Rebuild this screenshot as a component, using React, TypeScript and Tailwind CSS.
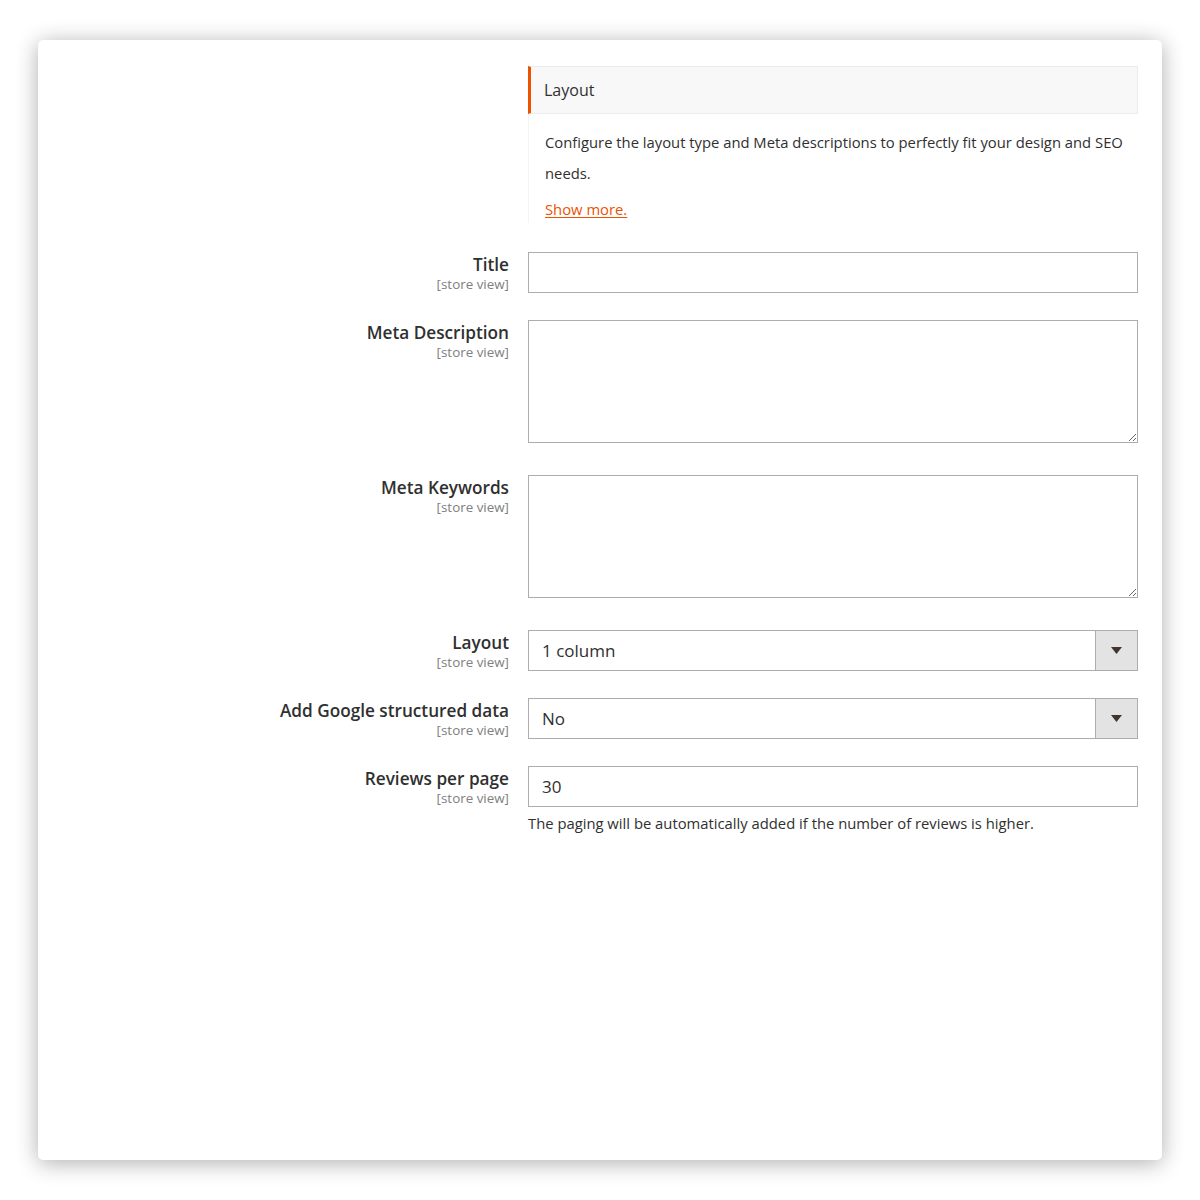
const font = { fontFamily: '"Open Sans", "Noto Sans", Arial, sans-serif' };

type FieldProps = {
  label: string;
  children: React.ReactNode;
  className?: string;
};

function Field({ label, children, className = "" }: FieldProps) {
  return (
    <div className={`flex gap-[19px] ${className}`}>
      <div className="flex w-[471px] shrink-0 flex-col items-end pt-[2px] text-right">
        <span className="text-[17.2px] font-semibold leading-[22px] text-[#303030]">
          {label}
        </span>
        <span className="text-[13.4px] leading-[16px] text-[#808080]">
          [store view]
        </span>
      </div>
      <div className="w-[610px] shrink-0">{children}</div>
    </div>
  );
}

function TextInput({ value = "" }: { value?: string }) {
  return (
    <input
      type="text"
      defaultValue={value}
      className="block h-[41px] w-full border border-[#adadad] bg-white px-[13px] text-[17px] text-[#303030] outline-none"
      style={font}
    />
  );
}

function TextArea() {
  return (
    <textarea
      className="block h-[123px] w-full border border-[#adadad] bg-white px-[13px] py-2 text-[15px] text-[#303030] outline-none"
      style={font}
    />
  );
}

function Select({ value }: { value: string }) {
  return (
    <div className="flex h-[41px] w-full border border-[#adadad] bg-white">
      <div className="flex flex-1 items-center px-[13px] text-[17px] text-[#303030]">
        {value}
      </div>
      <div className="flex w-[42px] items-center justify-center border-l border-[#adadad] bg-[#e3e3e3]">
        <svg width="11" height="7" viewBox="0 0 11 7">
          <path d="M0 0h11L5.5 7z" fill="#41362f" />
        </svg>
      </div>
    </div>
  );
}

export default function App() {
  return (
    <div className="min-h-[1200px] bg-white px-[38px] pt-[40px] pb-[40px]" style={font}>
      <div className="h-[1120px] w-[1124px] rounded-[5px] bg-white pt-[26px] shadow-[0_3px_22px_rgba(0,0,0,0.32)]">
        <div className="ml-[490px] w-[610px]">
          <div className="flex h-[48px] items-center border border-[#ececec] border-l-[3px] border-l-[#eb5202] bg-[#f8f8f8] pl-[13px] text-[16px] text-[#303030]">
            Layout
          </div>
          <div className="border-l border-[#f4f4f4] pt-[13px] pr-[4px] pb-[2px] pl-[16px]">
            <p className="text-[14.8px] leading-[31px] text-[#303030]">
              Configure the layout type and Meta descriptions to perfectly fit your design and SEO needs.
            </p>
            <a
              href="#"
              className="mt-[10px] inline-block text-[14.8px] leading-[20px] text-[#eb5202] underline underline-offset-2"
            >
              Show more.
            </a>
          </div>
        </div>

        <Field label="Title" className="mt-[29px]">
          <TextInput />
        </Field>
        <Field label="Meta Description" className="mt-[27px]">
          <TextArea />
        </Field>
        <Field label="Meta Keywords" className="mt-[32px]">
          <TextArea />
        </Field>
        <Field label="Layout" className="mt-[32px]">
          <Select value="1 column" />
        </Field>
        <Field label="Add Google structured data" className="mt-[27px]">
          <Select value="No" />
        </Field>
        <Field label="Reviews per page" className="mt-[27px]">
          <TextInput value="30" />
          <p className="mt-[5px] text-[14.8px] leading-[22px] text-[#303030]">
            The paging will be automatically added if the number of reviews is higher.
          </p>
        </Field>
      </div>
    </div>
  );
}
